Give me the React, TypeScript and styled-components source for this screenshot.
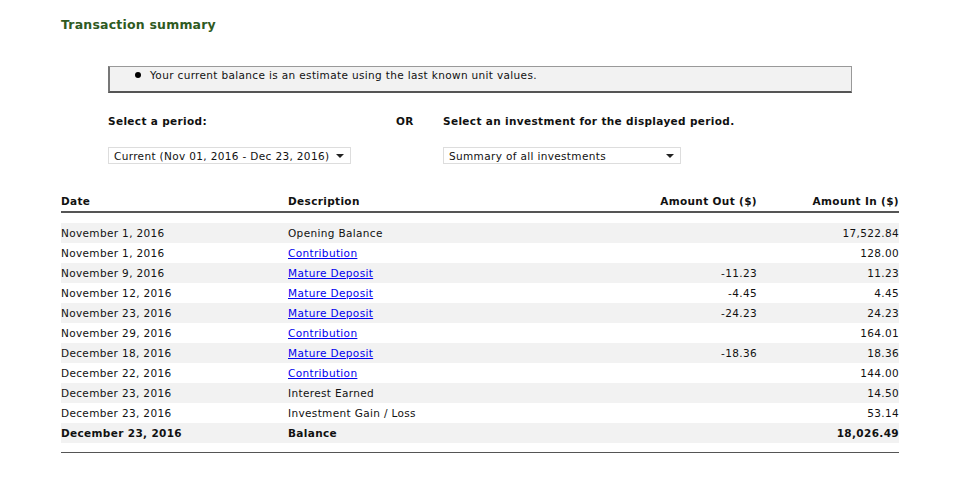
import React from "react";
import styled, { createGlobalStyle } from "styled-components";

const G = createGlobalStyle`
  body { margin: 0; background: #fff; font-family: "DejaVu Sans", Verdana, sans-serif; font-size: 10.5px; letter-spacing: 0.35px; color: #111; }
`;
const Page = styled.div`padding: 17px 57px 0 61px; width: 838px;`;
const Title = styled.h1`margin: 0; font-size: 12.5px; font-weight: bold; color: #2f5a1f; letter-spacing: 0.2px;`;
const Notice = styled.div`
  margin: 34px 47px 0 47px; height: 27px; background: #f2f2f2;
  border: 1px solid #999; border-bottom: 2px solid #555; border-left: 2px solid #777;
  display: flex; align-items: flex-start; padding: 2px 0 0 25px; gap: 9px; box-sizing: border-box;
`;
const Dot = styled.span`width: 6px; height: 6px; border-radius: 50%; background: #000; margin-top: 3px;`;
const Controls = styled.div`
  margin: 22px 0 0 47px; display: grid; grid-template-columns: 288px 47px 400px;
  row-gap: 20px; font-weight: bold; align-items: center; white-space: nowrap;
`;
const Select = styled.div<{ w: number }>`
  width: ${p => p.w}px; height: 17px; box-sizing: border-box; border: 1px solid #ddd;
  display: flex; align-items: center; justify-content: space-between; padding: 0 6px 0 5px;
  font-weight: normal;
`;
const Arrow = styled.span`width:0;height:0;border-left:4px solid transparent;border-right:4px solid transparent;border-top:4px solid #222;`;
const Table = styled.div`margin-top: 31px;`;
const Row = styled.div<{ shade?: boolean; bold?: boolean }>`
  display: grid; grid-template-columns: 227px 320px 149px 142px; height: 20px; align-items: center;
  background: ${p => (p.shade ? "#f2f2f2" : "transparent")}; font-weight: ${p => (p.bold ? "bold" : "normal")};
  & > :nth-child(3), & > :nth-child(4) { text-align: right; }
`;
const Head = styled(Row)`font-weight: bold; height: 16px; border-bottom: 2px solid #555; margin-bottom: 10px; align-items: start;`;
const Link = styled.a`color: #00e; text-decoration: underline;`;
const End = styled.div`border-top: 1px solid #555; margin-top: 9px;`;

const rows: [string, string, boolean, string, string][] = [
  ["November 1, 2016", "Opening Balance", false, "", "17,522.84"],
  ["November 1, 2016", "Contribution", true, "", "128.00"],
  ["November 9, 2016", "Mature Deposit", true, "-11.23", "11.23"],
  ["November 12, 2016", "Mature Deposit", true, "-4.45", "4.45"],
  ["November 23, 2016", "Mature Deposit", true, "-24.23", "24.23"],
  ["November 29, 2016", "Contribution", true, "", "164.01"],
  ["December 18, 2016", "Mature Deposit", true, "-18.36", "18.36"],
  ["December 22, 2016", "Contribution", true, "", "144.00"],
  ["December 23, 2016", "Interest Earned", false, "", "14.50"],
  ["December 23, 2016", "Investment Gain / Loss", false, "", "53.14"],
];

export default function App() {
  return (
    <Page>
      <G />
      <Title>Transaction summary</Title>
      <Notice><Dot />Your current balance is an estimate using the last known unit values.</Notice>
      <Controls>
        <span>Select a period:</span><span>OR</span><span>Select an investment for the displayed period.</span>
        <Select w={243}>Current (Nov 01, 2016 - Dec 23, 2016)<Arrow /></Select><span />
        <Select w={238}>Summary of all investments<Arrow /></Select>
      </Controls>
      <Table>
        <Head><span>Date</span><span>Description</span><span>Amount Out ($)</span><span>Amount In ($)</span></Head>
        {rows.map((r, i) => (
          <Row key={i} shade={i % 2 === 0}>
            <span>{r[0]}</span>
            <span>{r[2] ? <Link href="#">{r[1]}</Link> : r[1]}</span>
            <span>{r[3]}</span><span>{r[4]}</span>
          </Row>
        ))}
        <Row shade bold><span>December 23, 2016</span><span>Balance</span><span /><span>18,026.49</span></Row>
        <End />
      </Table>
    </Page>
  );
}
